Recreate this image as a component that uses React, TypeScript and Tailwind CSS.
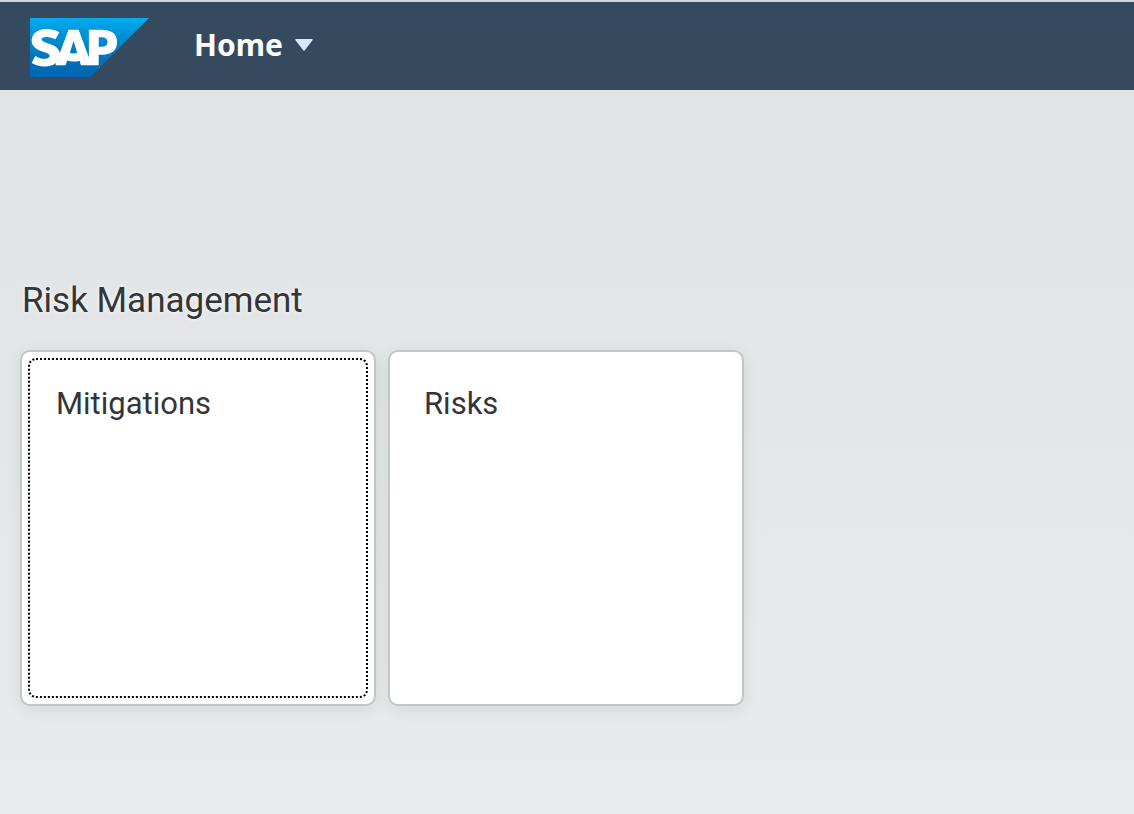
import { SiSap } from "react-icons/si";

function SapLogo() {
  return (
    <svg width="119" height="59" viewBox="0 0 119 59" role="img" aria-label="SAP" className="shrink-0">
      <defs>
        <linearGradient id="sap-blue" x1="0" y1="0" x2="0" y2="1">
          <stop offset="0" stopColor="#00aeef" />
          <stop offset="0.22" stopColor="#0097dc" />
          <stop offset="0.55" stopColor="#007cc5" />
          <stop offset="0.8" stopColor="#006cb8" />
          <stop offset="1" stopColor="#0066b3" />
        </linearGradient>
      </defs>
      <path d="M1 5H72V10H75C83 11 87.5 17 87.5 24C87.5 32 83 38 74 38H70V50H1Z" fill="#fff" />
      <SiSap x="0" y="-30" size={119} fill="url(#sap-blue)" stroke="none" />
    </svg>
  );
}

function Tile({ title, focused = false }: { title: string; focused?: boolean }) {
  return (
    <a
      href="#"
      className="block aspect-square w-full max-w-[356px] rounded-[10px] border-2 border-[#c3c6c8] bg-white p-1.5 shadow-[0_4px_16px_rgba(0,0,0,0.08)]"
    >
      <div
        className={
          focused
            ? "h-full rounded-lg border-2 border-dotted border-black px-[26px] py-6"
            : "h-full rounded-lg border-2 border-transparent px-[26px] py-6"
        }
      >
        <h3 className="text-[31px] leading-10 text-[#32363a]">{title}</h3>
      </div>
    </a>
  );
}

export default function App() {
  return (
    <div className="flex min-h-screen flex-col bg-linear-to-b from-[#dfe3e4] to-[#e9eaec] font-['Roboto',sans-serif]">
      <header className="flex h-[90px] items-start gap-[45px] border-t-2 border-[#d5d8da] bg-[#354a5f] pt-4 pl-[30px]">
        <SapLogo />
        <button
          type="button"
          className="mt-[7px] flex items-center gap-3 font-['Noto_Sans',sans-serif] text-[30px] leading-10 font-bold text-white"
        >
          Home
          <svg width="18" height="12" viewBox="0 0 18 12" aria-hidden="true">
            <path d="M1 0H17Q18.5 0 17.5 1.3L10 11Q9 12.3 8 11L.5 1.3Q-.5 0 1 0Z" fill="#d1e8ff" />
          </svg>
        </button>
      </header>
      <main className="px-5 pt-[187px]">
        <h2 className="pl-0.5 text-[35px] leading-12 text-[#32363a] [text-shadow:0_0_4px_#fff]">Risk Management</h2>
        <div className="mt-[25px] flex gap-3">
          <Tile title="Mitigations" focused />
          <Tile title="Risks" />
        </div>
      </main>
    </div>
  );
}
